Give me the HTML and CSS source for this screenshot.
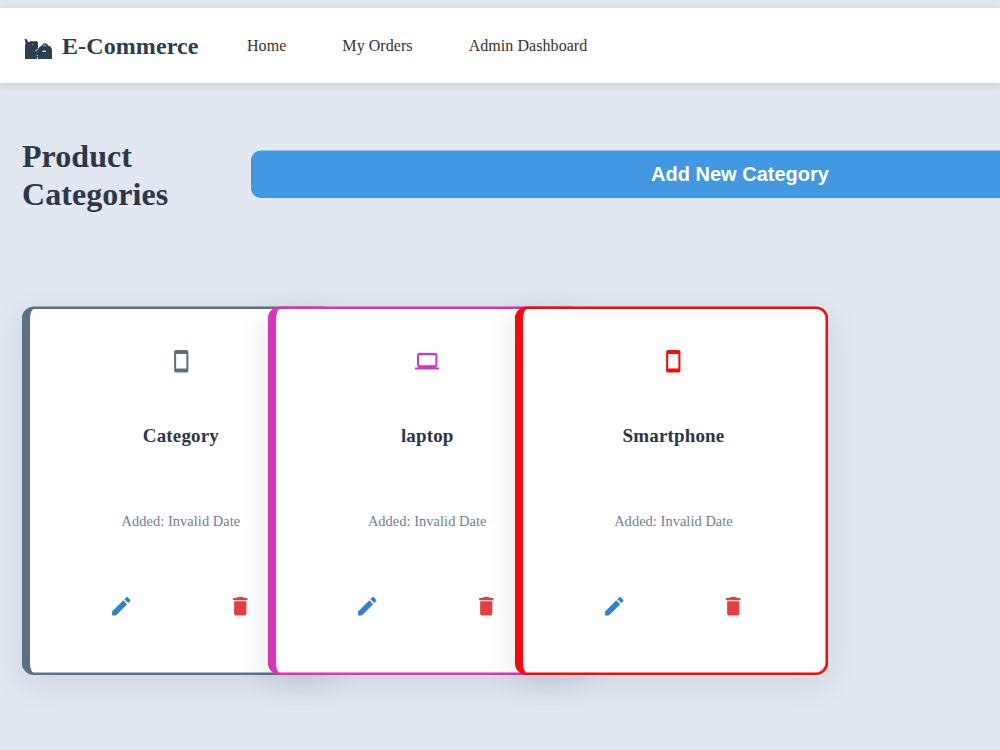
FILE: index.html
```html
<!DOCTYPE html>
<html lang="en">
<head>
    <meta charset="UTF-8">
    <meta name="viewport" content="width=device-width, initial-scale=1.0">
    <title>E-Commerce</title>
    <link rel="stylesheet" href="styles.css">
</head>
<body>

    <!-- shared icons -->
    <svg class="sprite">
        <symbol id="phone" viewBox="0 0 24 24"><path d="M17 1H7c-1.1 0-2 .9-2 2v18c0 1.1.9 2 2 2h10c1.1 0 2-.9 2-2V3c0-1.1-.9-2-2-2zm0 18H7V5h10v14z"/></symbol>
        <symbol id="laptop" viewBox="0 0 24 24"><path d="M20 18c1.1 0 2-.9 2-2V6c0-1.1-.9-2-2-2H4c-1.1 0-2 .9-2 2v10c0 1.1.9 2 2 2H0v2h24v-2h-4zM4 6h16v10H4V6z"/></symbol>
        <symbol id="edit" viewBox="0 0 24 24"><path d="M3 17.25V21h3.75L17.81 9.94l-3.75-3.75L3 17.25zM20.71 7.04c.39-.39.39-1.02 0-1.41l-2.34-2.34c-.39-.39-1.02-.39-1.41 0l-1.83 1.83 3.75 3.75 1.83-1.83z"/></symbol>
        <symbol id="delete" viewBox="0 0 24 24"><path d="M6 19c0 1.1.9 2 2 2h8c1.1 0 2-.9 2-2V7H6v12zM19 4h-3.500l-1-1h-5l-1 1H5v2h14V4z"/></symbol>
    </svg>

    <header class="navbar">
        <div class="logo">
            <svg class="logo-icon" viewBox="0 0 28 22">
                <path d="M.5.5l2.500 1 1 2.500 4-1 1 .5 4-.5 1 2v4l-.5 2.500 2.500-3 2-1c1-3 5-3 6 0l2.500 1 1.500 3v9.500H14l-.5-2.500-1 2.500H1V7.500L1.500 5z"/>
                <path class="cut" d="M19 8q1.500-1.500 3 0M18.500 13.500q2-2 3.500 0zM8.500 6.500h.8M11 13l3-1.500M12.500 18l1.500-1"/>
            </svg>
            <span>E-Commerce</span>
        </div>
        <nav class="nav-links">
            <a>Home</a>
            <a>My Orders</a>
            <a>Admin Dashboard</a>
        </nav>
    </header>

    <main class="container">
        <div class="page-header">
            <h1>Product Categories</h1>
            <button class="add-btn">Add New Category</button>
        </div>

        <div class="category-grid">
            <div class="card slate">
                <svg class="card-icon"><use href="#phone"/></svg>
                <h3>Category</h3>
                <p>Added: Invalid Date</p>
                <div class="actions">
                    <svg class="edit"><use href="#edit"/></svg>
                    <svg class="delete"><use href="#delete"/></svg>
                </div>
            </div>
            <div class="card pink">
                <svg class="card-icon"><use href="#laptop"/></svg>
                <h3>laptop</h3>
                <p>Added: Invalid Date</p>
                <div class="actions">
                    <svg class="edit"><use href="#edit"/></svg>
                    <svg class="delete"><use href="#delete"/></svg>
                </div>
            </div>
            <div class="card red">
                <svg class="card-icon"><use href="#phone"/></svg>
                <h3>Smartphone</h3>
                <p>Added: Invalid Date</p>
                <div class="actions">
                    <svg class="edit"><use href="#edit"/></svg>
                    <svg class="delete"><use href="#delete"/></svg>
                </div>
            </div>
        </div>
    </main>

</body>
</html>
```
FILE: styles.css
```css
body {
    margin: 0;
    padding-top: 8px;
    height: 742px;
    overflow: hidden;
    background-color: #e1e8f0;
    font-family: "Liberation Serif", "Times New Roman", serif;
}
.sprite {
    display: none;
}

.navbar {
    display: flex;
    align-items: center;
    height: 75px;
    padding-left: 24px;
    background-color: #fff;
    box-shadow: 0 2px 8px rgba(45, 65, 110, 0.17);
}
.logo {
    display: flex;
    align-items: center;
    gap: 10px;
    width: 223px;
    color: #2c3e50;
    font-size: 24px;
    font-weight: bold;
}
.logo span {
    padding-top: 2px;
    letter-spacing: 0.1px;
}
.logo-icon {
    width: 28px;
    height: 22px;
    margin-top: 6px;
    fill: #2c3e50;
}
.logo-icon .cut {
    fill: none;
    stroke: #fff;
    stroke-width: 0.7;
}
.nav-links {
    display: flex;
    gap: 56px;
    color: #333;
    font-size: 16px;
    letter-spacing: 0.06px;
}

.container {
    padding: 54px 22px 0;
}
.page-header {
    display: flex;
    align-items: center;
    width: 1207px;
    height: 76px;
}
h1 {
    flex: 0 0 229px;
    margin: 0;
    color: #2d3748;
    font-size: 32px;
    line-height: 38px;
    letter-spacing: 0.05px;
}
.add-btn {
    flex: 1;
    height: 47px;
    margin-bottom: 1px;
    padding: 0;
    border: none;
    border-radius: 10px;
    background-color: #4299e1;
    box-shadow: 0 -0.5px 0 #4299e1;
    color: #fff;
    font-family: "Liberation Sans", Arial, sans-serif;
    font-size: 20px;
    font-weight: bold;
}

.category-grid {
    display: grid;
    grid-template-columns: repeat(3, 246.3px);
    margin-top: 94px;
}
.card {
    display: flex;
    flex-direction: column;
    align-items: center;
    box-sizing: border-box;
    width: 313.3px;
    height: 368px;
    padding-top: 39.5px;
    padding-right: 1.5px;
    border: 2px solid;
    border-left-width: 8px;
    border-radius: 12px;
    background-color: #fff;
    box-shadow: 0 -0.5px 0 currentColor, inset -0.5px -0.5px 0 currentColor, 0 8px 32px rgba(20, 25, 45, 0.1);
}
.slate {
    border-color: #5a7184;
    color: #5a7184;
}
.pink {
    border-color: #da32b9;
    color: #da32b9;
}
.red {
    border-color: #ff0707;
    color: #ff0707;
}
.card svg {
    width: 24.5px;
    height: 24.5px;
    fill: currentColor;
}
.card h3 {
    margin: 51px 0 0;
    color: #2d3748;
    font-size: 19px;
    line-height: 24px;
    letter-spacing: 0.15px;
}
.card p {
    margin: 64px 0 0;
    color: #718096;
    font-size: 14.4px;
    line-height: 18px;
    letter-spacing: 0.06px;
}
.actions {
    display: flex;
    gap: 94.5px;
    margin-top: 63.5px;
}
.card .edit {
    color: #3182ce;
}
.card .delete {
    color: #e53e3e;
}
```
